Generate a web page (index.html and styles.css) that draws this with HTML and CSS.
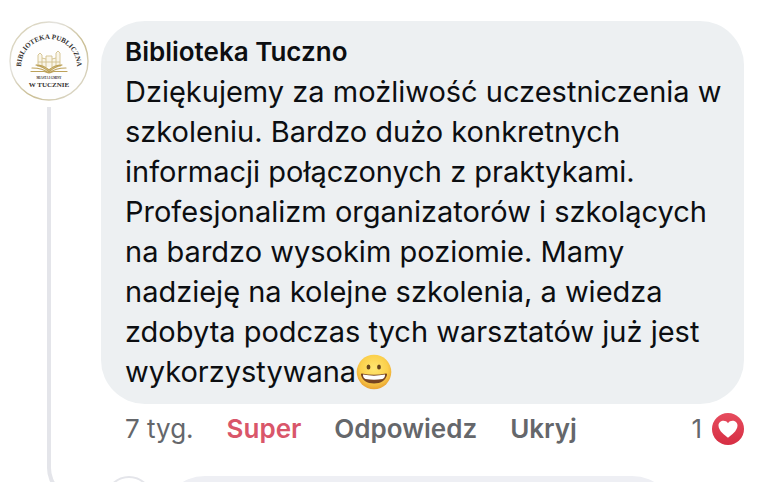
FILE: index.html
```html
<!DOCTYPE html>
<html lang="pl">
<head>
    <meta charset="UTF-8">
    <meta name="viewport" content="width=device-width, initial-scale=1">
    <title>Biblioteka Tuczno</title>
    <link rel="stylesheet" href="styles.css">
</head>
<body>
<main class="thread">
    <article class="comment">
        <div class="side">
            <svg class="avatar" viewBox="0 0 80 80" role="img" aria-label="Biblioteka Publiczna w Tucznie">
                <defs>
                    <path id="arc" d="M12 50 L12 46 A28 28 0 0 1 68 46 L68 50"/>
                    <linearGradient id="ring" x1="0" y1="0" x2="1" y2="1">
                        <stop offset="0" stop-color="#cfc49a"/>
                        <stop offset="0.3" stop-color="#e4e3df"/>
                        <stop offset="0.6" stop-color="#c9bd92"/>
                        <stop offset="1" stop-color="#e2e1dc"/>
                    </linearGradient>
                </defs>
                <circle cx="40" cy="40" r="39" fill="#fefefe" stroke="url(#ring)" stroke-width="1.400"/>
                <text class="logo-text" text-anchor="middle"><textPath href="#arc" startOffset="50%">BIBLIOTEKA PUBLICZNA</textPath></text>
                <g fill="none" stroke="#d3c18c" stroke-width="0.900" stroke-linejoin="round">
                    <path d="M29 46V34l2-2 2 2v3l4 1v-3h6v3l4-1v-5l2-2 2 2v14" fill="#faf6e9"/>
                    <path d="M33 37v9M37 38v8M43 38v8M47 37v9M29 41h22"/>
                </g>
                <g fill="none" stroke="#bda25a" stroke-width="1.200" stroke-linecap="round" stroke-linejoin="round">
                    <path d="M40 49c-4-4-8-5-13-5 4 1 9 3 13 7 4-4 9-6 13-7-5 0-9 1-13 5z" fill="#e9d9a6"/>
                    <path d="M23 47c7 0 12 1 17 5 5-4 10-5 17-5M22 50.500h13c2 0 3 1.500 5 1.500s3-1.500 5-1.500h13"/>
                </g>
                <text class="logo-text logo-small" x="40" y="58" text-anchor="middle">MIASTA I GMINY</text>
                <text class="logo-text" x="40" y="66" text-anchor="middle">W TUCZNIE</text>
            </svg>
            <div class="line"></div>
        </div>
        <div class="body">
            <div class="bubble">
                <h2 class="name">Biblioteka Tuczno</h2>
                <p class="text">Dziękujemy za możliwość uczestniczenia w szkoleniu. Bardzo dużo konkretnych informacji połączonych z praktykami. Profesjonalizm organizatorów i szkolących na bardzo wysokim poziomie. Mamy nadzieję na kolejne szkolenia, a wiedza zdobyta podczas tych warsztatów już jest <span class="last">wykorzystywana<svg class="emoji" viewBox="0 0 36 36" role="img" aria-label="uśmiech">
                    <defs>
                        <radialGradient id="face" cx="0.5" cy="0.4" r="0.6">
                            <stop offset="0" stop-color="#ffe670"/>
                            <stop offset="0.65" stop-color="#fbd04c"/>
                            <stop offset="1" stop-color="#e9a232"/>
                        </radialGradient>
                    </defs>
                    <circle cx="18" cy="18" r="17.300" fill="url(#face)"/>
                    <ellipse cx="12.500" cy="13" rx="1.900" ry="2.600" fill="#65421b"/>
                    <ellipse cx="23" cy="13" rx="1.900" ry="2.600" fill="#65421b"/>
                    <path d="M6 19.500c8 1.600 16 1.600 24 0 .8 0 1.200.5 1 1.500-1.200 5-6 8.500-13 8.500S6.200 26 5 21c-.2-1 .2-1.500 1-1.500z" fill="#764321"/>
                    <path d="M7 20.500c7.500 1.500 14.500 1.500 22 0 .3 1.800-.8 3.800-2.500 4.500-5.500 1-11.500 1-17 0C7.800 24.300 6.700 22.300 7 20.500z" fill="#fff"/>
                </svg></span></p>
            </div>
            <div class="actions">
                <span class="time">7 tyg.</span>
                <button type="button" class="action liked">Super</button>
                <button type="button" class="action">Odpowiedz</button>
                <button type="button" class="action">Ukryj</button>
                <span class="reactions">1
                    <svg class="heart" viewBox="0 0 32 32" role="img" aria-label="Super">
                        <defs>
                            <linearGradient id="red" x1="0" y1="0" x2="0" y2="1">
                                <stop offset="0" stop-color="#e64c5e"/>
                                <stop offset="1" stop-color="#d62e43"/>
                            </linearGradient>
                        </defs>
                        <circle cx="16" cy="16" r="16" fill="url(#red)"/>
                        <path d="M16 24.800C13 22.500 6.500 18 6.500 12.600c0-5 6.800-6.500 9.500-2.300 2.700-4.200 9.500-2.700 9.500 2.300 0 5.400-6.500 9.900-9.500 12.200z" fill="#fff"/>
                    </svg>
                </span>
            </div>
        </div>
    </article>
    <article class="reply">
        <div class="reply-avatar"></div>
        <div class="reply-bubble"></div>
    </article>
</main>
</body>
</html>
```
FILE: styles.css
```css
* {
    box-sizing: border-box;
    margin: 0;
    padding: 0;
}

body {
    height: 100vh;
    overflow: hidden;
    background-color: #fff;
    color: #0c0e11;
    font-family: Inter, "Liberation Sans", sans-serif;
}

.thread {
    height: 100%;
    overflow: hidden;
    padding: 21px 24px 0 9px;
}

.comment {
    display: flex;
    gap: 12px;
}

.side {
    display: flex;
    flex-direction: column;
    flex: 0 0 80px;
}

.avatar {
    display: block;
    width: 80px;
    height: 80px;
}

.logo-text {
    font-family: "Liberation Serif", serif;
    font-size: 7px;
    font-weight: bold;
    fill: #33302f;
}

.logo-small {
    font-size: 3px;
}

/* thread line, bends towards the reply avatar */
.line {
    flex: 1;
    margin: 6px 0 -24px 38px;
    border-left: 4px solid #e4e5ea;
    border-bottom: 4px solid #e4e5ea;
    border-bottom-left-radius: 32px;
}

.body {
    flex: 1;
    min-width: 0;
}

.bubble {
    padding: 11px 16px 11px 24px;
    border-radius: 44px;
    background-color: #edf0f2;
}

.name {
    font-size: 26px;
    font-weight: 600;
    line-height: 40px;
}

.text {
    padding-bottom: 1px;
    font-size: 29px;
    line-height: 40px;
}

.last {
    white-space: nowrap;
}

.emoji {
    width: 36px;
    height: 36px;
    vertical-align: -8px;
}

.actions {
    display: flex;
    align-items: center;
    height: 72px;
    padding: 0 0 22px 24px;
    gap: 33px;
    color: #65676b;
    font-size: 26px;
    line-height: 32px;
}

.action {
    border: 0;
    background: none;
    color: inherit;
    font: inherit;
    font-weight: 600;
    cursor: pointer;
}

.liked {
    color: #d9566a;
}

.reactions {
    display: flex;
    align-items: center;
    gap: 10px;
    margin-left: auto;
}

.heart {
    width: 32px;
    height: 32px;
}

.reply {
    display: flex;
    gap: 8px;
    padding: 0 68px 0 96px;
}

.reply-avatar {
    flex: 0 0 48px;
    height: 48px;
    border: 2px solid #e4e5ea;
    border-radius: 50%;
}

.reply-bubble {
    flex: 1;
    height: 96px;
    border-radius: 44px;
    background-color: #eeeff4;
}
```
